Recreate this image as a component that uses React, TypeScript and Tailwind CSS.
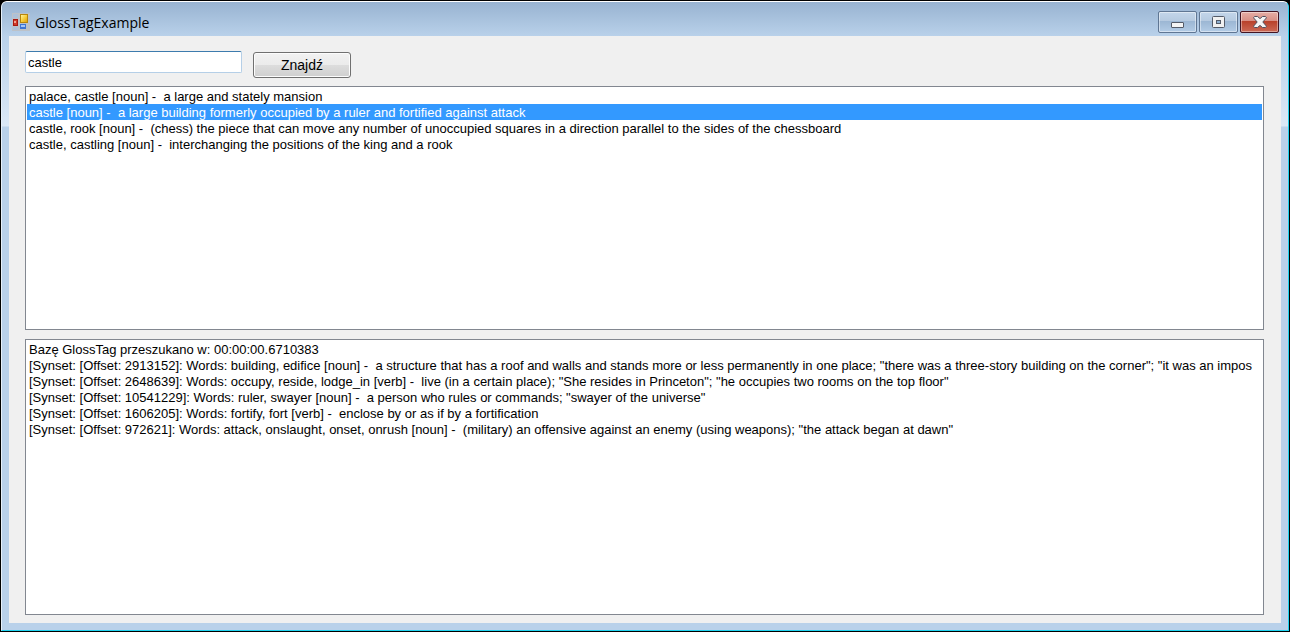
import { useState } from "react";

const results: string[] = [
  "palace, castle [noun] -  a large and stately mansion",
  "castle [noun] -  a large building formerly occupied by a ruler and fortified against attack",
  "castle, rook [noun] -  (chess) the piece that can move any number of unoccupied squares in a direction parallel to the sides of the chessboard",
  "castle, castling [noun] -  interchanging the positions of the king and a rook",
];

const synsets: string[] = [
  "Bazę GlossTag przeszukano w: 00:00:00.6710383",
  '[Synset: [Offset: 2913152]: Words: building, edifice [noun] -  a structure that has a roof and walls and stands more or less permanently in one place; "there was a three-story building on the corner"; "it was an impos',
  '[Synset: [Offset: 2648639]: Words: occupy, reside, lodge_in [verb] -  live (in a certain place); "She resides in Princeton"; "he occupies two rooms on the top floor"',
  '[Synset: [Offset: 10541229]: Words: ruler, swayer [noun] -  a person who rules or commands; "swayer of the universe"',
  "[Synset: [Offset: 1606205]: Words: fortify, fort [verb] -  enclose by or as if by a fortification",
  '[Synset: [Offset: 972621]: Words: attack, onslaught, onset, onrush [noun] -  (military) an offensive against an enemy (using weapons); "the attack began at dawn"',
];

function AppIcon() {
  return (
    <svg width="18" height="18" viewBox="0 0 18 18" shapeRendering="crispEdges" aria-hidden="true">
      <defs>
        <linearGradient id="gold" x1="0" y1="0" x2="1" y2="1">
          <stop offset="0" stopColor="#fff3a0" />
          <stop offset="0.5" stopColor="#f8cf3c" />
          <stop offset="1" stopColor="#e0a010" />
        </linearGradient>
      </defs>
      <rect width="18" height="18" fill="#bcc2c9" />
      <rect x="1" y="1" width="5" height="4" fill="#adc1d8" />
      <rect x="1" y="14" width="5" height="3" fill="#adc1d8" />
      <rect x="8" y="1" width="8" height="9" fill="#b8860b" />
      <rect x="9" y="2" width="6" height="7" fill="url(#gold)" />
      <rect x="1" y="6" width="5" height="7" fill="#a8180f" />
      <rect x="2" y="7" width="3" height="5" fill="#cf3a28" />
      <rect x="2" y="8" width="2" height="2" fill="#f3a08e" />
      <rect x="8" y="11" width="6" height="5" fill="#3f75d2" />
      <rect x="9" y="12" width="4" height="2" fill="#a3c4f6" />
    </svg>
  );
}

function MinimizeIcon() {
  return (
    <svg width="13" height="6" viewBox="0 0 13 6" aria-hidden="true">
      <rect x="0.5" y="0.5" width="12" height="5" rx="0.5" fill="#f4f4f4" stroke="#545b68" />
    </svg>
  );
}

function MaximizeIcon() {
  return (
    <svg width="13" height="12" viewBox="0 0 13 12" aria-hidden="true">
      <rect x="0.5" y="0.5" width="12" height="11" rx="1" fill="#f1f1f1" stroke="#545b68" />
      <rect x="4.5" y="4.5" width="4" height="3" fill="#8fb0d0" stroke="#545b68" />
    </svg>
  );
}

function CloseIcon() {
  return (
    <svg width="14" height="12" viewBox="0 0 14 12" aria-hidden="true">
      <path
        d="M1.500 .5h3L7 2.600 9.500 .5h3l1 1.300L9.800 6l3.700 4.200-1 1.300h-3L7 9.400 4.500 11.500h-3l-1-1.300L4.200 6 .5 1.800z"
        fill="#f4f4f4"
        stroke="#50505e"
        strokeLinejoin="round"
      />
    </svg>
  );
}

const captionButton =
  "flex h-[22px] w-[39px] justify-center rounded-[2px] border border-[#5f7693] bg-[linear-gradient(#c3d6ea,#b6cae0_45%,#9bb6d3_45%,#b3cce6)] shadow-[inset_0_0_0_1px_rgba(255,255,255,0.45)]";

export default function App() {
  const [query, setQuery] = useState("castle");
  const [selected, setSelected] = useState(1);

  return (
    <div className="flex min-h-screen bg-black p-px font-['Liberation_Sans',Arial,sans-serif] text-[13px] leading-4 text-black">
      <div className="flex min-w-0 flex-1 flex-col rounded-t-[6px] border border-t-white border-r-[#1fd3f0] border-b-[#1fd3f0] border-l-[#e6f0fa] bg-[#b9d1ea] bg-[linear-gradient(#b9d1ea_34px,#dbe8f6_124px,#b9d1ea_125px)]">
        <header className="flex h-[34px] items-start justify-between rounded-t-[5px] bg-linear-to-b from-[#98b3d1] to-[#b9d1ea] pr-[9px] pl-[10px]">
          <div className="flex items-start gap-[5px] pt-[11px]">
            <AppIcon />
            <h1 className="font-['Open_Sans','Noto_Sans',sans-serif] text-[14px] leading-5">GlossTagExample</h1>
          </div>
          <div className="flex gap-[2px] pt-[9px]">
            <button type="button" aria-label="Minimize" className={`${captionButton} items-end pb-1`}>
              <MinimizeIcon />
            </button>
            <button type="button" aria-label="Maximize" className={`${captionButton} items-center`}>
              <MaximizeIcon />
            </button>
            <button
              type="button"
              aria-label="Close"
              className="flex h-[22px] w-[39px] items-center justify-center rounded-[2px] border border-[#431422] bg-[linear-gradient(#e6aea6,#d88f84_45%,#b8402a_45%,#cc6a56)] shadow-[inset_0_0_0_1px_rgba(255,255,255,0.4)]"
            >
              <CloseIcon />
            </button>
          </div>
        </header>

        <main className="mx-[7px] mb-[7px] flex min-w-0 flex-1 flex-col bg-[#f0f0f0] pt-[15px] pr-[17px] pb-2 pl-4">
          <form className="flex items-start gap-[11px]" onSubmit={(event) => event.preventDefault()}>
            <input
              type="text"
              aria-label="Szukane słowo"
              value={query}
              onChange={(event) => setQuery(event.target.value)}
              className="h-[22px] w-[217px] rounded-[2px] border border-[#b5cfe7] border-t-[#3d7bad] bg-white px-[2px] outline-none"
            />
            <button
              type="submit"
              className="mt-px h-[26px] w-[98px] rounded-[3px] border border-[#707070] bg-[linear-gradient(#f2f2f2,#ebebeb_50%,#dddddd_50%,#cfcfcf)] text-sm shadow-[inset_0_0_0_1px_#fcfcfc]"
            >
              Znajdź
            </button>
          </form>

          <ul
            role="listbox"
            aria-label="Wyniki"
            className="mt-2 flex-[244_1_0px] overflow-hidden border border-[#828790] bg-white px-px pt-px leading-[18px]"
          >
            {results.map((text, index) => (
              <li
                key={text}
                role="option"
                aria-selected={index === selected}
                onClick={() => setSelected(index)}
                className={
                  index === selected
                    ? "h-4 bg-[#3399ff] px-[2px] whitespace-pre text-white"
                    : "h-4 px-[2px] whitespace-pre"
                }
              >
                {text}
              </li>
            ))}
          </ul>

          <ul
            aria-label="Synsety"
            className="mt-[9px] flex-[276_1_0px] overflow-hidden border border-[#828790] bg-white px-px pt-px leading-[18px]"
          >
            {synsets.map((text) => (
              <li key={text} className="h-4 pl-[2px] whitespace-pre">
                {text}
              </li>
            ))}
          </ul>
        </main>
      </div>
    </div>
  );
}
